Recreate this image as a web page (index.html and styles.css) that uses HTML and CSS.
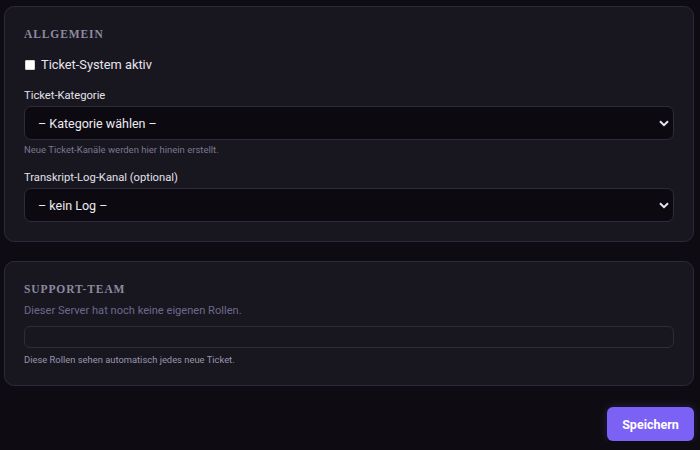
FILE: index.html
```html
<!DOCTYPE html>
<html lang="de">
<head>
<meta charset="utf-8">
<title>Ticket</title>
<link rel="stylesheet" href="styles.css">
</head>
<body>
<div class="page">
  <section class="card">
    <h3 class="card-title">Allgemein</h3>
    <label class="check">
      <span class="box"></span>
      <span>Ticket-System aktiv</span>
    </label>
    <div class="field">
      <div class="label">Ticket-Kategorie</div>
      <div class="select">
        <span>– Kategorie wählen –</span>
        <svg class="chev" width="10" height="7" viewBox="0 0 10 7"><path d="M1 1.2 L5 5.2 L9 1.2" fill="none" stroke="#e8e6f0" stroke-width="2"/></svg>
      </div>
      <div class="hint">Neue Ticket-Kanäle werden hier hinein erstellt.</div>
    </div>
    <div class="field field2">
      <div class="label">Transkript-Log-Kanal (optional)</div>
      <div class="select">
        <span>– kein Log –</span>
        <svg class="chev" width="10" height="7" viewBox="0 0 10 7"><path d="M1 1.2 L5 5.2 L9 1.2" fill="none" stroke="#e8e6f0" stroke-width="2"/></svg>
      </div>
    </div>
  </section>
  <section class="card card2">
    <h3 class="card-title">Support-Team</h3>
    <div class="muted">Dieser Server hat noch keine eigenen Rollen.</div>
    <div class="roles"></div>
    <div class="hint">Diese Rollen sehen automatisch jedes neue Ticket.</div>
  </section>
  <div class="actions">
    <button class="save">Speichern</button>
  </div>
</div>
</body>
</html>
```

FILE: styles.css
```css
html, body {
  margin: 0;
  background: #0e0c12;
}
body {
  font-family: Roboto, "Noto Sans", sans-serif;
  color: #e6e4ee;
}
.page {
  padding: 6px 6px 0 4px;
  display: flex;
  flex-direction: column;
}
.card {
  background: #18161f;
  border: 1px solid #2c2a38;
  border-radius: 10px;
  padding: 20px 19px 19px 19px;
  display: flex;
  flex-direction: column;
}
.card2 {
  margin-top: 19px;
}
.card-title {
  margin: 0;
  font-family: "Liberation Serif", "DejaVu Serif", serif;
  font-weight: bold;
  font-size: 11.5px;
  letter-spacing: 0.9px;
  text-transform: uppercase;
  color: #8d8a9f;
  line-height: 14px;
}
.check {
  display: flex;
  align-items: center;
  gap: 6px;
  margin-top: 15px;
  font-size: 12.8px;
  line-height: 18px;
}
.box {
  width: 8px;
  height: 8px;
  background: #fff;
  border: 1px solid #d8d8d8;
  border-radius: 1px;
  margin-left: 1px;
}
.field {
  display: flex;
  flex-direction: column;
  margin-top: 15px;
}
.field2 {
  margin-top: 15px;
}
.label {
  font-size: 11.2px;
  line-height: 14px;
  color: #e3e1ea;
  margin-bottom: 3px;
}
.select {
  height: 32px;
  background: #0c0a10;
  border: 1px solid #2e2c3b;
  border-radius: 7px;
  display: flex;
  align-items: center;
  justify-content: space-between;
  padding: 0 4px 0 13px;
  font-size: 12.5px;
  color: #ecebf2;
}
.chev {
  display: block;
}
.hint {
  font-size: 9.5px;
  line-height: 12px;
  color: #7a7890;
  margin-top: 4px;
}
.muted {
  font-size: 11.1px;
  line-height: 14px;
  color: #6c6a8c;
  margin-top: 8px;
}
.roles {
  height: 20px;
  border: 1px solid #2e2c3b;
  border-radius: 6px;
  margin-top: 8px;
}
.card2 .hint {
  margin-top: 6px;
  font-size: 9.4px;
  color: #9896ad;
}
.actions {
  display: flex;
  justify-content: flex-end;
  margin-top: 21px;
}
.save {
  width: 87px;
  height: 34px;
  background: #7b61f4;
  color: #fff;
  border: 0;
  border-radius: 6px;
  font-family: Roboto, sans-serif;
  font-weight: bold;
  font-size: 12.5px;
  box-shadow: 0 0 8px rgba(123, 97, 244, 0.25);
}
```
